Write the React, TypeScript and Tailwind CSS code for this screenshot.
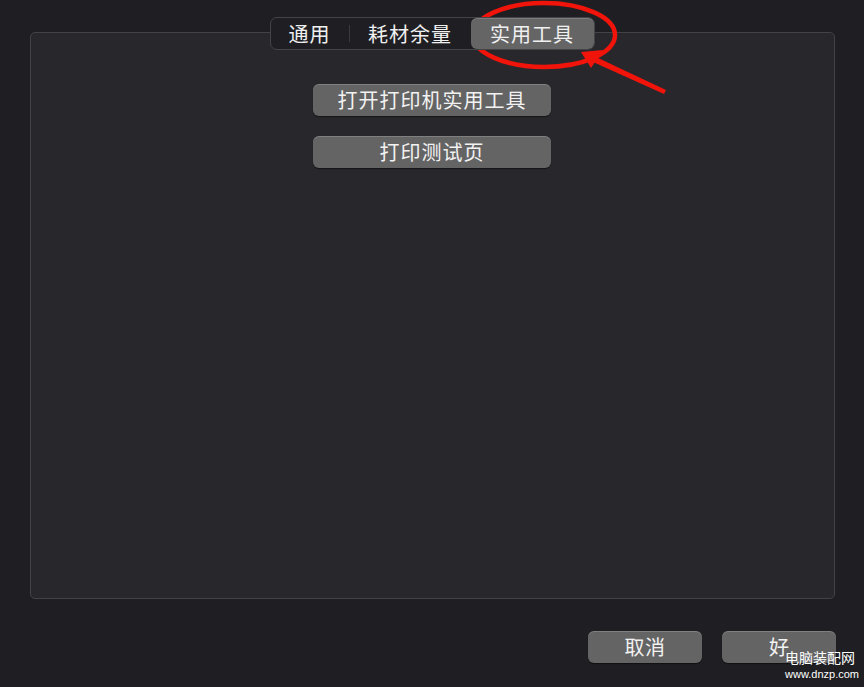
import React from 'react';

const font = { fontFamily: '"Noto Sans CJK SC", "Noto Sans", sans-serif' };

const PushButton = ({ label, className = '' }: { label: string; className?: string }) => (
    <button
        className={`flex items-center justify-center rounded-[6px] bg-[#646465] text-[#f2f2f2] shadow-[inset_0_1px_0_rgba(255,255,255,0.18),0_1px_1px_rgba(0,0,0,0.5)] ${className}`}
        style={font}
    >
        {label}
    </button>
);

export default function App() {
    return (
        <div className="relative w-[864px] h-[687px] overflow-hidden bg-[#1f1f23]" style={font}>
            {/* window body */}
            <div className="flex flex-col items-center pt-[17px]">
                {/* segmented tabs */}
                <div className="relative z-10 flex h-[33px] items-stretch rounded-[7px] border border-[#434348] bg-[#1f1f23] text-[20px] tracking-[1px] text-[#f0f0f0]">
                    <div className="flex w-[78px] items-center justify-center">通用</div>
                    <div className="my-[7px] w-px bg-[#3a3a3e]" />
                    <div className="flex w-[121px] items-center justify-center">耗材余量</div>
                    <div className="flex w-[123px] items-center justify-center rounded-[6px] bg-[#656566] shadow-[inset_0_1px_0_rgba(255,255,255,0.15)]">实用工具</div>
                </div>

                {/* panel */}
                <div className="-mt-[18px] flex h-[567px] w-[805px] flex-col items-center gap-[20px] rounded-[5px] border border-[#434347] bg-[#28282c] pt-[51px]">
                    <PushButton label="打开打印机实用工具" className="h-[32px] w-[238px] text-[20px] tracking-[1px]" />
                    <PushButton label="打印测试页" className="h-[32px] w-[238px] text-[20px] tracking-[1px]" />
                </div>

                {/* dialog buttons */}
                <div className="mt-[32px] flex w-full justify-end gap-[20px] pr-[28px]">
                    <PushButton label="取消" className="h-[32px] w-[114px] text-[20px] tracking-[0.5px]" />
                    <PushButton label="好" className="h-[32px] w-[114px] text-[20px]" />
                </div>
            </div>

            {/* red annotation */}
            <svg className="pointer-events-none absolute inset-0" width="864" height="687" viewBox="0 0 864 687">
                <ellipse cx="544" cy="35" rx="71" ry="32" fill="none" stroke="#f0140a" strokeWidth="4.5" />
                <polygon points="664,94 666,90 596,57 593,62" fill="#f0140a" />
                <polygon points="581,52 603,50 591,68" fill="#f0140a" />
            </svg>

            {/* watermark */}
            <div className="pointer-events-none absolute left-[785px] top-[648px] flex flex-col items-start text-white">
                <span className="text-[14px] leading-[18px]">电脑装配网</span>
                <span className="mt-[2px] text-[11px] leading-[13px]" style={{ fontFamily: '"Liberation Sans", sans-serif' }}>www.dnzp.com</span>
            </div>
        </div>
    );
}
